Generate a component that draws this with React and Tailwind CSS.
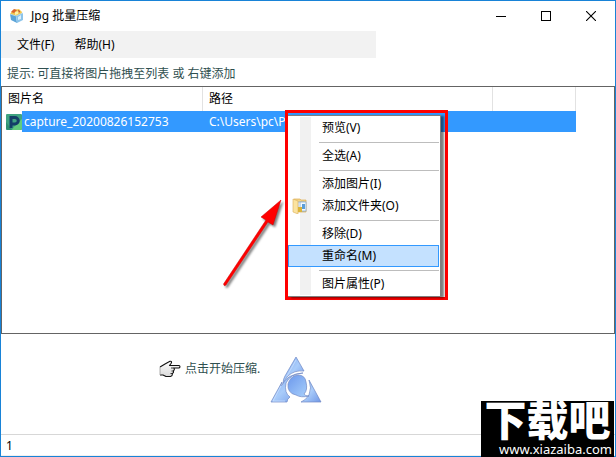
import React from 'react';

const menuGroups = [
  [{ label: '预览(V)' }],
  [{ label: '全选(A)' }],
  [{ label: '添加图片(I)' }, { label: '添加文件夹(O)', folder: true }],
  [{ label: '移除(D)' }, { label: '重命名(M)', active: true }],
  [{ label: '图片属性(P)' }],
];

function AppIcon() {
  return (
    <svg viewBox="0 0 16 16" className="h-4 w-4">
      <path d="M1 6 L4 2 L10 1 L13 4 L12 8 L5 9 Z" fill="#f3c64e" />
      <path d="M2 4 L5 1 L8 2 L5 5 Z" fill="#d9632f" />
      <path d="M6 4 L10 3 L9 6 L6 7 Z" fill="#fff2a8" />
      <path d="M9 2 L11 3 L10 5 Z" fill="#b63b2a" />
      <path d="M1 6 L7 8 L8 15 L2 12 Z" fill="#5ba4d8" />
      <path d="M7 8 L14 5 L14 12 L8 15 Z" fill="#8cc4ea" />
      <path d="M9 9 L12 7 L12 11 L9 12 Z" fill="#d8effc" />
      <path d="M1 6 L7 8 L14 5" fill="none" stroke="#b5daf3" strokeWidth=".8" />
    </svg>
  );
}

function FileIcon() {
  return (
    <svg viewBox="0 0 16 16" className="h-4 w-4 shrink-0">
      <rect width="16" height="16" rx="1" fill="#3fa381" />
      <path d="M0 8 L6 16 H2 Q0 16 0 14 Z" fill="#2f9070" />
      <path d="M8 13 L16 5 V14 Q16 16 14 16 H6 Z" fill="#62cc7c" />
      <path d="M5 14 V3.500 H9 A3 3 0 0 1 9 10 H5" fill="none" stroke="#143f68" strokeWidth="3" />
    </svg>
  );
}

function FolderIcon() {
  return (
    <svg viewBox="0 0 16 16" className="h-4 w-4">
      <path d="M2 1 H8 L9 2 H14 V14 H3 Z" fill="#f3d488" stroke="#dcae55" strokeWidth=".7" />
      <rect x="6" y="4" width="6" height="9" fill="#fff" stroke="#8caed0" strokeWidth=".7" />
      <rect x="8" y="4" width="6" height="9" fill="#f2f9ff" stroke="#7ca4cc" strokeWidth=".7" />
      <rect x="10" y="6" width="3" height="5" fill="#5c9ed8" />
      <path d="M1 1 L6 3 V16 L1 14 Z" fill="#fbe3a0" stroke="#dcb059" strokeWidth=".6" />
      <rect x="6" y="9" width="4" height="5" fill="#dcb53a" />
    </svg>
  );
}

function HandIcon() {
  return (
    <svg viewBox="0 0 22 18" className="h-[18px] w-[22px]">
      <defs>
        <linearGradient id="hand" x1="0" y1="0" x2="0" y2="1">
          <stop offset="0" stopColor="#fff" />
          <stop offset="1" stopColor="#d8d8d8" />
        </linearGradient>
      </defs>
      <path
        d="M1 7 L6 4 L11 1.300 Q13.500 1 12 3.500 L10.500 5.500 H20 Q22 6.500 20 8 H15 Q16 9.500 14.500 11 Q15 12.500 13.500 13.500 Q13.500 16 11.500 16.500 L7 16.500 L4 15 H1 Z"
        fill="url(#hand)"
      />
      <path
        d="M1 7 L6 4 L11 1.300 Q13.500 1 12 3.500 L10.500 5.500 H20 Q22 6.500 20 8 H15 Q16 9.500 14.500 11 Q15 12.500 13.500 13.500 Q13.500 16 11.500 16.500 L7 16.500 L4 15 H1"
        fill="none"
        stroke="#111"
        strokeWidth="1.1"
        strokeLinejoin="round"
      />
      <path d="M1 7 V15" stroke="#999" strokeWidth=".8" />
      <path d="M12 8 H15 M12.500 11 H14.500 M11.500 13.500 H13.500" stroke="#111" strokeWidth=".8" />
    </svg>
  );
}

function TriangleLogo() {
  return (
    <svg viewBox="0 0 52 48" className="h-12 w-[52px]">
      <defs>
        <linearGradient id="glass" x1="0" y1="0" x2="1" y2="1">
          <stop offset="0" stopColor="#7ba5ef" />
          <stop offset=".5" stopColor="#a9ccfa" />
          <stop offset="1" stopColor="#7097e6" />
        </linearGradient>
        <linearGradient id="ball" x1="0" y1="0" x2="1" y2="1">
          <stop offset="0" stopColor="#6c98ec" />
          <stop offset="1" stopColor="#abd2fc" />
        </linearGradient>
      </defs>
      <g stroke="#7088c4" strokeWidth=".7" strokeLinejoin="round">
        <path d="M26 1 L34 15 Q24 14 18 20 Q15 23 13 28 Q13 23 15 20 Z" fill="url(#glass)" />
        <path d="M12 26 Q10 31 12 29 Q17 18 33 17 Q20 18 16 27 Q14 37 20 41 Q17 43 17 46 H1 Z" fill="url(#glass)" />
        <path d="M39 24 L51 46 H31 Q36 44 39 39 Q42 32 39 24 Z" fill="url(#glass)" />
        <path d="M18 28 Q20 20 28 19 Q35 19 36 26 Q38 34 34 38 Q35 40 39 40 Q31 42 26 39 Q17 37 18 28 Z" fill="url(#ball)" />
      </g>
      <path d="M26 4 L17 20 M11 30 L3 45 H15" fill="none" stroke="#cfe3ff" strokeWidth=".7" />
    </svg>
  );
}

function ContextMenu() {
  return (
    <div className="absolute left-[284px] top-[109px] border-[3px] border-[#ff0000] pt-[2px] pr-1">
      <div
        role="menu"
        className="relative w-[153px] border-t border-r border-b border-[#808080] bg-white py-px pr-px shadow-[3px_1px_2px_rgba(0,0,0,0.5)]"
      >
        <div className="absolute top-px bottom-px left-3 w-[11px] bg-[#f1f1f1]" />
        {menuGroups.map((group, i) => (
          <div key={i} className="relative">
            {i > 0 && (
              <div className="ml-[31px] h-[6px] pt-[3px]">
                <div className="h-px bg-[#bdbdbd]" />
              </div>
            )}
            {group.map(item => (
              <button
                key={item.label}
                role="menuitem"
                className={
                  item.active
                    ? 'flex h-[22px] w-full items-center border border-[#3399ff] bg-[#c4e1ff] pl-[33px] text-left'
                    : 'flex h-[22px] w-full items-center pl-[34px] text-left'
                }
              >
                {item.folder && (
                  <span className="absolute left-1">
                    <FolderIcon />
                  </span>
                )}
                {item.label}
              </button>
            ))}
          </div>
        ))}
      </div>
    </div>
  );
}

function Arrow() {
  return (
    <svg viewBox="0 0 70 95" className="absolute left-[219px] top-[195px] h-[95px] w-[70px] drop-shadow-[2px_2px_1px_rgba(0,0,0,0.5)]">
      <path d="M3.500 88 L46 24 L41 21 L61 4 L53 29 L48 26 L6 89 Q4 91 3.500 88 Z" fill="#f00" stroke="#c80000" strokeWidth=".5" />
    </svg>
  );
}

function TitleBar() {
  return (
    <header className="flex h-[30px] items-center pr-px pl-2">
      <AppIcon />
      <h1 className="ml-[6px] flex-1">Jpg 批量压缩</h1>
      <button aria-label="最小化" className="flex h-full w-[46px] items-center justify-center">
        <svg viewBox="0 0 10 10" className="h-[10px] w-[10px]" shapeRendering="crispEdges">
          <path d="M0 5.500 H10" stroke="#000" />
        </svg>
      </button>
      <button aria-label="最大化" className="flex h-full w-[44px] items-center justify-center">
        <svg viewBox="0 0 10 10" className="h-[10px] w-[10px]" shapeRendering="crispEdges">
          <path d="M.5 .5 H9.500 V9.500 H.5 Z" fill="none" stroke="#000" />
        </svg>
      </button>
      <button aria-label="关闭" className="flex h-full w-[46px] items-center justify-center">
        <svg viewBox="0 0 10 10" className="h-[10px] w-[10px]">
          <path d="M0 0 L10 10 M10 0 L0 10" stroke="#000" strokeWidth="1.1" />
        </svg>
      </button>
    </header>
  );
}

function FileList() {
  return (
    <div className="h-[248px] border border-[#646464]">
      <table className="table-fixed border-separate border-spacing-0 text-left">
        <colgroup>
          <col className="w-[201px]" />
          <col className="w-[290px]" />
          <col className="w-[83px]" />
        </colgroup>
        <thead>
          <tr className="h-6">
            <th className="border-r border-[#e2e2e2] p-0 pl-[6px] font-normal">图片名</th>
            <th className="border-r border-[#e2e2e2] p-0 pl-[6px] font-normal">路径</th>
            <th className="border-r border-[#e2e2e2] p-0" />
          </tr>
        </thead>
        <tbody>
          <tr className="h-[21px] text-white">
            <td className="p-0">
              <div className="flex h-[21px] items-center pl-1">
                <FileIcon />
                <span className="flex h-full flex-1 items-center bg-[#3399ff] pl-[2px]">capture_20200826152753</span>
              </div>
            </td>
            <td className="bg-[#3399ff] p-0 pl-[6px]">C:\Users\pc\P</td>
            <td className="bg-[#3399ff] p-0" />
          </tr>
        </tbody>
      </table>
    </div>
  );
}

export default function App() {
  return (
    <div className="relative flex min-h-screen flex-col border border-[#1883d7] bg-white font-['Noto_Sans','Noto_Sans_CJK_SC',sans-serif] text-[12px] leading-4 text-black">
      <TitleBar />

      <nav className="flex h-[27px] w-[61%] items-center gap-5 bg-[#f2f2f2] pl-4">
        <button>文件(F)</button>
        <button>帮助(H)</button>
      </nav>

      <p className="flex h-7 items-center pt-1 pl-[6px] text-[#2f4f4f]">提示: 可直接将图片拖拽至列表 或 右键添加</p>

      <FileList />

      {/* Zone de compression */}
      <main className="flex flex-1 items-start pt-[22px] pl-[158px]">
        <button className="flex items-center gap-1 pt-1 text-[#2f4f4f]">
          <HandIcon />
          点击开始压缩.
        </button>
        <div className="ml-[10px]">
          <TriangleLogo />
        </div>
      </main>

      <footer className="h-[22px] border-t border-b border-t-[#d7d7d7] border-b-[#f0f0f0] pt-[3px] pl-[5px]">1</footer>

      <Arrow />
      <ContextMenu />

      {/* Filigrane */}
      <div className="absolute right-px -bottom-px h-14 w-[133px] bg-black text-white">
        <div className="text-center font-['Liberation_Sans','Noto_Sans_CJK_SC',sans-serif] text-[42px] leading-[42px] font-black">下载吧</div>
        <div className="pr-[2px] text-right text-[13px] leading-[13px]">www.xiazaiba.com</div>
      </div>
    </div>
  );
}
